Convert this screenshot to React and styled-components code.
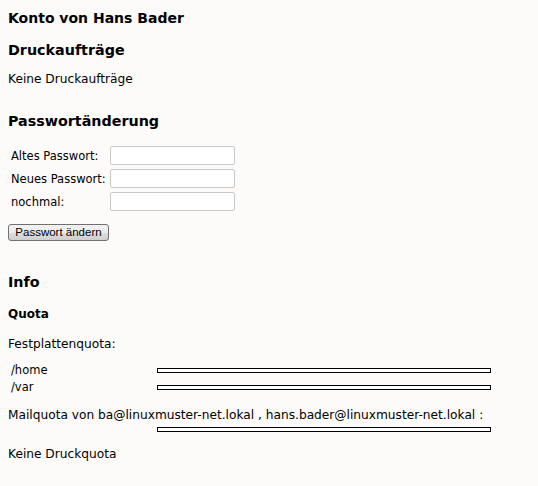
import styled, { createGlobalStyle } from 'styled-components';

const GlobalStyle = createGlobalStyle`
  html, body {
    margin: 0;
    padding: 0;
    background: #fcfbfa;
  }
  body {
    font-family: 'DejaVu Sans', Verdana, sans-serif;
    color: #000;
  }
`;

const Page = styled.div`
  padding: 6px 8px 20px 8px;
`;

const Title = styled.h1`
  margin: 0 0 10px 0;
  font-size: 14px;
  line-height: 24px;
  font-weight: bold;
`;

const SectionTitle = styled.h2`
  margin: ${(p) => p.$top || 0}px 0 0 0;
  font-size: 14.3px;
  line-height: 20px;
  font-weight: bold;
`;

const SubTitle = styled.h3`
  margin: ${(p) => p.$top || 0}px 0 0 0;
  font-size: 12px;
  line-height: 18px;
  font-weight: bold;
`;

const Text = styled.p`
  margin: ${(p) => p.$top || 0}px 0 0 0;
  font-size: 12.2px;
  line-height: 18px;
`;

const FormGrid = styled.div`
  margin-top: 15px;
  display: grid;
  grid-template-columns: 99px 125px;
  row-gap: 4px;
  padding-left: 3px;
  align-items: center;
`;

const Label = styled.label`
  font-size: 11.5px;
  line-height: 18px;
  white-space: nowrap;
`;

const TextInput = styled.input`
  box-sizing: border-box;
  width: 125px;
  height: 19px;
  margin: 0;
  border: 1px solid #c9c9c9;
  border-radius: 2px;
  background: #fff;
`;

const SubmitButton = styled.button`
  margin-top: 13px;
  box-sizing: border-box;
  width: 101px;
  height: 17px;
  padding: 0;
  font-family: 'Liberation Sans', Arial, sans-serif;
  font-size: 11.5px;
  line-height: 15px;
  color: #000;
  border: 1px solid #707070;
  border-radius: 3px;
  background: linear-gradient(#f2f2f2 0%, #ebebeb 50%, #dddddd 51%, #cfcfcf 100%);
`;

const QuotaGrid = styled.div`
  margin-top: ${(p) => p.$top || 0}px;
  display: grid;
  grid-template-columns: 146px 334px;
  row-gap: 0;
  padding-left: 3px;
  align-items: center;
`;

const QuotaLabel = styled.span`
  font-size: 11.5px;
  line-height: 17px;
`;

const QuotaBar = styled.div`
  box-sizing: border-box;
  width: 334px;
  height: 5px;
  border: 1px solid #000;
  background: #fff;
`;

export default function App() {
  return (
    <Page>
      <GlobalStyle />
      <Title>Konto von Hans Bader</Title>
      <SectionTitle>Druckaufträge</SectionTitle>
      <Text $top={10}>Keine Druckaufträge</Text>

      <SectionTitle $top={23}>Passwortänderung</SectionTitle>
      <FormGrid>
        <Label>Altes Passwort:</Label>
        <TextInput type="password" />
        <Label>Neues Passwort:</Label>
        <TextInput type="password" />
        <Label>nochmal:</Label>
        <TextInput type="password" />
      </FormGrid>
      <SubmitButton type="button">Passwort ändern</SubmitButton>

      <SectionTitle $top={31}>Info</SectionTitle>
      <SubTitle $top={13}>Quota</SubTitle>
      <Text $top={12}>Festplattenquota:</Text>
      <QuotaGrid $top={9}>
        <QuotaLabel>/home</QuotaLabel>
        <QuotaBar />
        <QuotaLabel>/var</QuotaLabel>
        <QuotaBar />
      </QuotaGrid>
      <Text $top={10}>
        Mailquota von ba@linuxmuster-net.lokal , hans.bader@linuxmuster-net.lokal :
      </Text>
      <QuotaGrid $top={3}>
        <span />
        <QuotaBar />
      </QuotaGrid>
      <Text $top={13}>Keine Druckquota</Text>
    </Page>
  );
}
